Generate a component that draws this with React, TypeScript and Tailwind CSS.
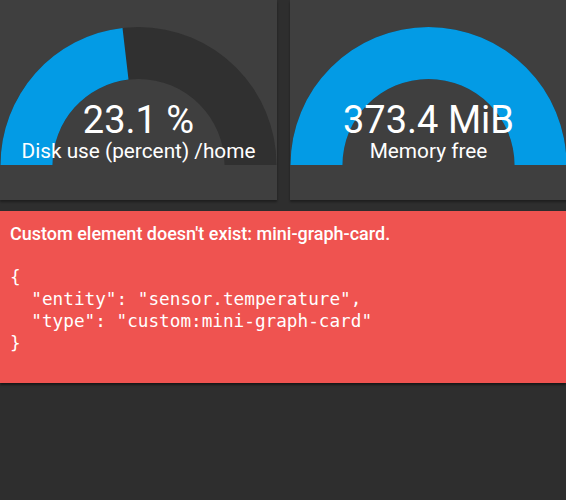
import React from 'react';

const ARC_BG = 'M 0.5 138 A 138 138 0 0 1 276.5 138 L 224.5 138 A 86 86 0 0 0 52.5 138 Z';

// fraction is where the blue fill stops, 0..1 from the left end of the arc
function arcPath(fraction: number) {
  if (fraction >= 1) return ARC_BG;
  const a = Math.PI * fraction;
  const cx = 138.5;
  const cy = 138;
  const ox = cx - 138 * Math.cos(a);
  const oy = cy - 138 * Math.sin(a);
  const ix = cx - 86 * Math.cos(a);
  const iy = cy - 86 * Math.sin(a);
  return `M 0.5 138 A 138 138 0 0 1 ${ox.toFixed(1)} ${oy.toFixed(1)} L ${ix.toFixed(1)} ${iy.toFixed(1)} A 86 86 0 0 0 52.5 138 Z`;
}

type GaugeProps = { value: string; label: string; fraction: number };

function GaugeCard({ value, label, fraction }: GaugeProps) {
  return (
    <div className="h-[200px] w-[277px] shrink-0 bg-[#3f3f3f] shadow-[0_2px_2px_rgba(0,0,0,0.35)]">
      <div className="relative mt-[27px] h-[138px] w-[277px]">
        <svg width="277" height="138" viewBox="0 0 277 138" className="block">
          <path d={ARC_BG} fill="#303030" />
          <path d={arcPath(fraction)} fill="#039be5" />
        </svg>
        <div className="absolute inset-x-0 top-[75px] flex flex-col items-center text-white">
          <div className="text-[38px] leading-[37px]">{value}</div>
          <div className="text-[20.8px] leading-[24px]">{label}</div>
        </div>
      </div>
    </div>
  );
}

export default function App() {
  return (
    <div
      className="h-[500px] w-[566px] overflow-hidden bg-[#2e2e2e]"
      style={{ fontFamily: 'Roboto, "Liberation Sans", sans-serif' }}
    >
      <div className="flex gap-[13px]">
        <GaugeCard value="23.1 %" label="Disk use (percent) /home" fraction={0.463} />
        <GaugeCard value="373.4 MiB" label="Memory free" fraction={1} />
      </div>

      <div className="mt-[11px] bg-[#ef5350] px-[10px] pt-[12px] pb-[29px] text-white shadow-[0_2px_2px_rgba(0,0,0,0.5)]">
        <div className="text-[18px] font-medium leading-[22px]">
          Custom element doesn't exist: mini-graph-card.
        </div>
        <pre className="mt-[21px] font-['DejaVu_Sans_Mono',monospace] text-[17.7px] leading-[22px]">
{`{
  "entity": "sensor.temperature",
  "type": "custom:mini-graph-card"
}`}
        </pre>
      </div>
    </div>
  );
}
